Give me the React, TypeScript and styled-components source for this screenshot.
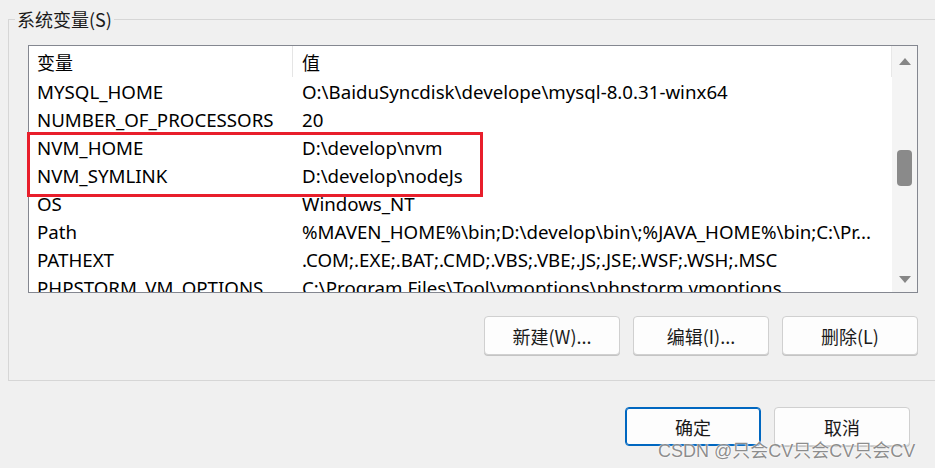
import React from "react";
import styled, { createGlobalStyle } from "styled-components";

const GlobalStyle = createGlobalStyle`
  html, body {
    margin: 0;
    padding: 0;
    background: #f0f0f0;
  }
  body {
    font-family: "Noto Sans", "Noto Sans CJK SC", sans-serif;
    color: #000;
  }
`;

const Page = styled.div`
  position: relative;
  width: 935px;
  height: 468px;
  overflow: hidden;
  background: #f0f0f0;
`;

const Group = styled.fieldset`
  box-sizing: border-box;
  margin: 8px 0 0 8px;
  padding: 15px 0 0 19px;
  width: 960px;
  height: 373px;
  border: 1px solid #d6d6d6;
  border-right: none;
  min-width: 0;
`;

const Legend = styled.legend`
  margin-left: -13px;
  padding: 0 2px;
  height: 22px;
  font-family: "Noto Sans CJK SC", sans-serif;
  font-size: 18px;
  line-height: 22px;
  color: #1a1a1a;
`;

const ListView = styled.div`
  box-sizing: border-box;
  display: flex;
  width: 890px;
  height: 248px;
  border: 1px solid #848790;
  background: #fff;
`;

const TableArea = styled.div`
  flex: 1;
  overflow: hidden;
  font-size: 18.7px;
`;

const HeaderRow = styled.div`
  display: flex;
  height: 31px;
  border-right: 1px solid #e8e8e8;
  font-family: "Noto Sans CJK SC", sans-serif;
  font-size: 18px;
`;

const Row = styled.div`
  display: flex;
  height: 28px;
  align-items: center;
`;

const NameCell = styled.div<{ $head?: boolean }>`
  box-sizing: border-box;
  width: 264px;
  flex: none;
  padding-left: 8px;
  white-space: nowrap;
  overflow: hidden;
  display: flex;
  align-items: center;
  border-right: ${(p) => (p.$head ? "1px solid #e5e5e5" : "none")};
  height: 100%;
`;

const ValueCell = styled.div`
  flex: 1;
  padding-left: 9px;
  white-space: nowrap;
  overflow: hidden;
  display: flex;
  align-items: center;
  height: 100%;
`;

const ScrollBar = styled.div`
  flex: none;
  width: 25px;
  background: #f4f4f4;
  display: flex;
  flex-direction: column;
  align-items: center;
  justify-content: space-between;
  padding: 12px 0 9px;
  box-sizing: border-box;
  position: relative;
`;

const Arrow = styled.div<{ $down?: boolean }>`
  width: 0;
  height: 0;
  border-left: 6px solid transparent;
  border-right: 6px solid transparent;
  ${(p) =>
    p.$down
      ? "border-top: 7px solid #868686;"
      : "border-bottom: 7px solid #868686;"}
`;

const Thumb = styled.div`
  position: absolute;
  left: 5px;
  top: 104px;
  width: 15px;
  height: 36px;
  border-radius: 4px;
  background: #8a8a8a;
`;

const Highlight = styled.div`
  position: absolute;
  left: 27px;
  top: 132px;
  width: 456px;
  height: 65px;
  box-sizing: border-box;
  border: 3px solid #e81e2b;
  pointer-events: none;
`;

const ButtonRow = styled.div`
  display: flex;
  gap: 13px;
  width: 890px;
  justify-content: flex-end;
  margin-top: 23px;
`;

const Button = styled.button<{ $primary?: boolean }>`
  box-sizing: border-box;
  width: 136px;
  height: 39px;
  background: #fdfdfd;
  border: 1px solid ${(p) => (p.$primary ? "#0067c0" : "#d0d0d0")};
  box-shadow: ${(p) => (p.$primary ? "inset 0 0 0 1px #0067c0" : "0 1px 0 #c4c4c4")};
  border-radius: 4px;
  font-family: "Noto Sans CJK SC", sans-serif;
  font-size: 18px;
  color: #1a1a1a;
  padding: 0;
  display: flex;
  align-items: center;
  justify-content: center;
`;

const FooterRow = styled.div`
  display: flex;
  gap: 13px;
  justify-content: flex-end;
  padding: 26px 25px 0 0;
`;

const Watermark = styled.div`
  position: absolute;
  left: 658px;
  top: 436px;
  font-family: "Liberation Sans", "Noto Sans CJK SC", sans-serif;
  font-size: 18px;
  color: rgba(120, 120, 120, 0.85);
  text-shadow: 0 0 2px #fff, 0 0 1px #fff;
  white-space: nowrap;
  pointer-events: none;
`;

const rows: [string, string][] = [
  ["MYSQL_HOME", "O:\\BaiduSyncdisk\\develope\\mysql-8.0.31-winx64"],
  ["NUMBER_OF_PROCESSORS", "20"],
  ["NVM_HOME", "D:\\develop\\nvm"],
  ["NVM_SYMLINK", "D:\\develop\\nodeJs"],
  ["OS", "Windows_NT"],
  ["Path", "%MAVEN_HOME%\\bin;D:\\develop\\bin\\;%JAVA_HOME%\\bin;C:\\Pr..."],
  ["PATHEXT", ".COM;.EXE;.BAT;.CMD;.VBS;.VBE;.JS;.JSE;.WSF;.WSH;.MSC"],
  ["PHPSTORM_VM_OPTIONS", "C:\\Program Files\\Tool\\vmoptions\\phpstorm.vmoptions"],
];

export default function App() {
  return (
    <Page>
      <GlobalStyle />
      <Group>
        <Legend>系统变量(S)</Legend>
        <ListView>
          <TableArea>
            <HeaderRow>
              <NameCell $head>变量</NameCell>
              <ValueCell>值</ValueCell>
            </HeaderRow>
            {rows.map(([name, value]) => (
              <Row key={name}>
                <NameCell>{name}</NameCell>
                <ValueCell>{value}</ValueCell>
              </Row>
            ))}
          </TableArea>
          <ScrollBar>
            <Arrow />
            <Thumb />
            <Arrow $down />
          </ScrollBar>
        </ListView>
        <ButtonRow>
          <Button>新建(W)...</Button>
          <Button>编辑(I)...</Button>
          <Button>删除(L)</Button>
        </ButtonRow>
      </Group>
      <FooterRow>
        <Button $primary>确定</Button>
        <Button>取消</Button>
      </FooterRow>
      <Highlight />
      <Watermark>CSDN @只会CV只会CV只会CV</Watermark>
    </Page>
  );
}
